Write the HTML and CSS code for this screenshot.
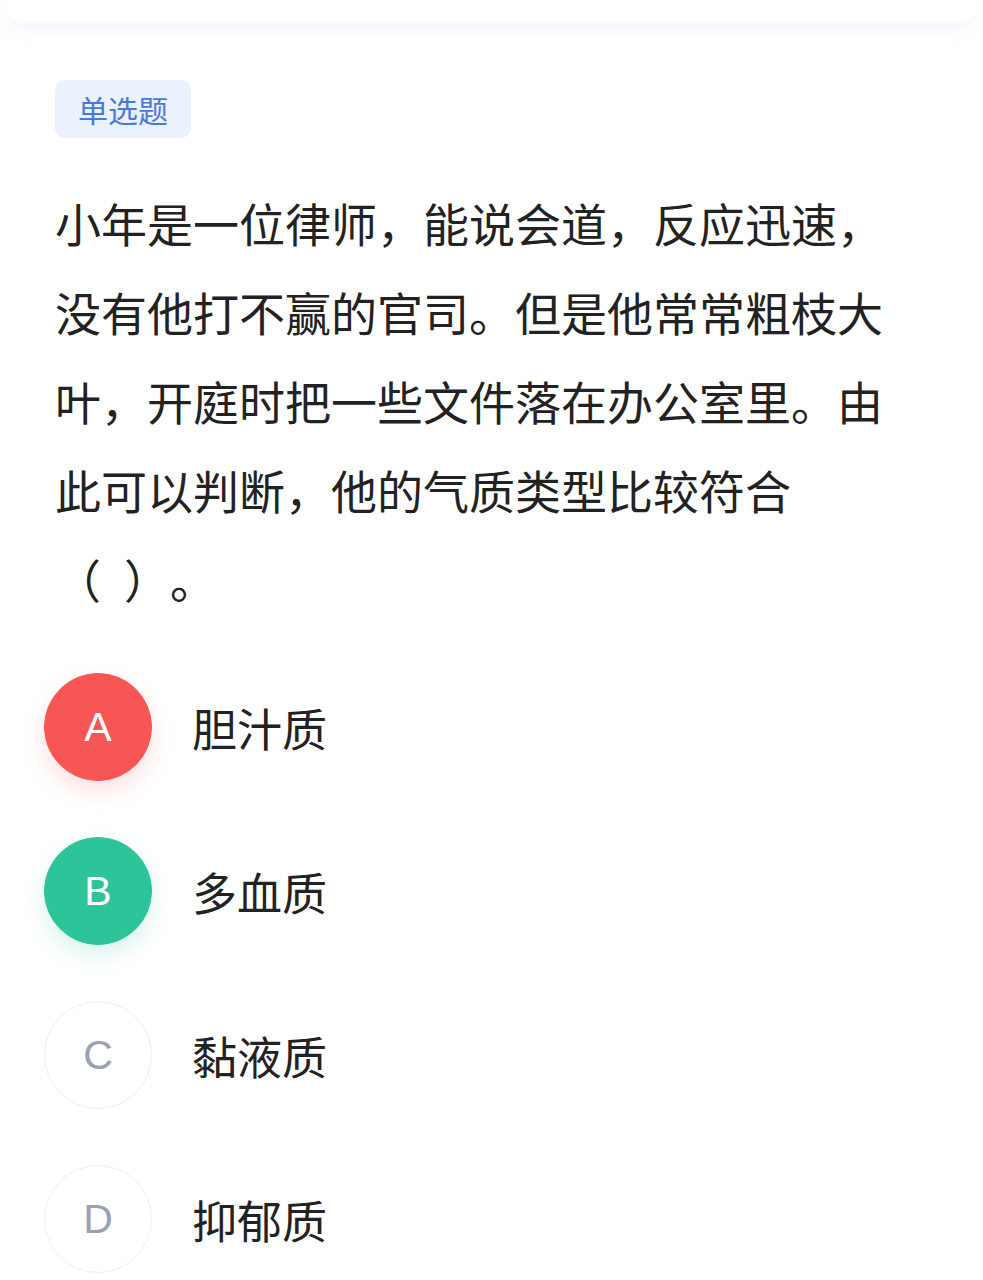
FILE: index.html
```html
<!DOCTYPE html>
<html lang="zh-CN">
<head>
    <meta charset="UTF-8">
    <meta name="viewport" content="width=device-width, initial-scale=1.0">
    <title>单选题</title>
    <link rel="stylesheet" href="styles.css">
</head>
<body>
    <div class="top-bar"></div>

    <div class="question">
        <span class="tag">单选题</span>
        <p class="stem">小年是一位律师，能说会道，反应迅速，没有他打不赢的官司。但是他常常粗枝大叶，开庭时把一些文件落在办公室里。由此可以判断，他的气质类型比较符合<span class="blank">（&ensp;）。</span></p>
    </div>

    <ul class="options">
        <li class="option">
            <span class="letter wrong">A</span>
            <span class="label">胆汁质</span>
        </li>
        <li class="option">
            <span class="letter right">B</span>
            <span class="label">多血质</span>
        </li>
        <li class="option">
            <span class="letter">C</span>
            <span class="label">黏液质</span>
        </li>
        <li class="option">
            <span class="letter">D</span>
            <span class="label">抑郁质</span>
        </li>
    </ul>
</body>
</html>
```

FILE: styles.css
```css
body {
    margin: 0;
    background-color: #ffffff;
    font-family: "Noto Sans CJK SC", "Noto Sans", sans-serif;
    color: #222222;
}

.top-bar {
    height: 22px;
    margin: 0 3px;
    background: #ffffff;
    border-radius: 0 0 22px 22px;
    box-shadow: 0 8px 18px rgba(120, 140, 190, 0.08);
}

.question {
    padding: 58px 55px 0 55px;
}

.tag {
    display: inline-block;
    height: 58px;
    line-height: 58px;
    padding: 0 23px;
    border-radius: 10px;
    background-color: #ebf1fd;
    color: #4a78d8;
    font-size: 30px;
}

.stem {
    width: 850px;
    margin: 40px 0 0 0;
    font-size: 46px;
    line-height: 89px;
    text-spacing-trim: space-all;
}

.blank {
    white-space: nowrap;
}

.options {
    list-style: none;
    margin: 50px 0 0 0;
    padding: 0 0 0 44px;
    display: flex;
    flex-direction: column;
    gap: 56px;
}

.option {
    display: flex;
    align-items: center;
    gap: 40px;
}

.letter {
    width: 106px;
    height: 106px;
    border-radius: 50%;
    border: 1px solid #eceef2;
    display: flex;
    align-items: center;
    justify-content: center;
    font-family: "Liberation Sans", Arial, sans-serif;
    font-size: 41px;
    color: #9aa1b4;
    background: #ffffff;
}

.letter.wrong {
    background-color: #f75655;
    border-color: #f75655;
    color: #ffffff;
    box-shadow: 0 10px 22px rgba(247, 86, 85, 0.18);
}

.letter.right {
    background-color: #2ec499;
    border-color: #2ec499;
    color: #ffffff;
    box-shadow: 0 10px 22px rgba(46, 196, 153, 0.18);
}

.label {
    font-size: 45px;
    color: #222222;
}
```
